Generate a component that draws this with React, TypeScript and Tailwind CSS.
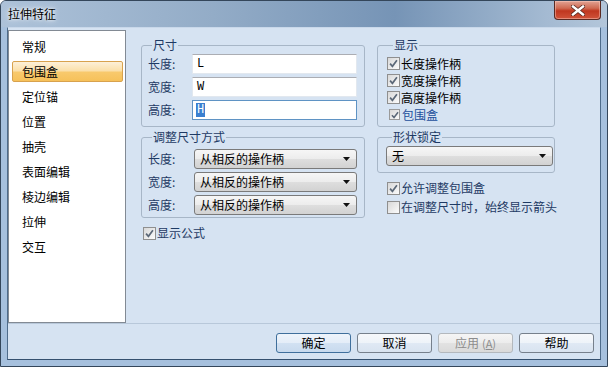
import React from "react";

const NAVY = "text-[#1e3a64]";

function Check({ checked, small }: { checked: boolean; small?: boolean }) {
  return (
    <span
      className={
        small
          ? "flex items-center justify-center shrink-0 w-[11px] h-[11px] border border-[#9a9a9a] bg-[linear-gradient(135deg,#d8d8d8,#fbfbfb)]"
          : "flex items-center justify-center shrink-0 w-[13px] h-[13px] border border-[#8f8f8f] bg-[linear-gradient(135deg,#d8d8d8,#fbfbfb)]"
      }
    >
      {checked && (
        <svg viewBox="0 0 10 10" className={small ? "w-[8px] h-[8px]" : "w-[9px] h-[9px]"}>
          <path d="M1.2 5.2 L3.8 8.2 L8.8 1.5" stroke="#5b6878" strokeWidth="1.9" fill="none" />
        </svg>
      )}
    </span>
  );
}

function Combo({ text }: { text: string }) {
  return (
    <div className="flex-1 h-[20px] flex items-center justify-between rounded-[3px] border border-[#7a7a7a] bg-[linear-gradient(to_bottom,#f6f6f6,#ececec_50%,#dedede_51%,#d2d2d2)] pl-[5px] pr-[6px] text-[12px] text-black">
      <span className="leading-[16px]">{text}</span>
      <svg width="7" height="4" viewBox="0 0 7 4">
        <path d="M0 0h7L3.5 4z" fill="#111" />
      </svg>
    </div>
  );
}

function Btn({ children, kind }: { children: React.ReactNode; kind?: "default" | "disabled" }) {
  const cls =
    kind === "default"
      ? "border-[#3f6f9c] bg-[linear-gradient(to_bottom,#eef4fb,#e4edf8_50%,#d2e1f2_51%,#c8daee)] text-black"
      : kind === "disabled"
      ? "border-[#b3b8bd] bg-[linear-gradient(to_bottom,#f5f5f5,#ececec_50%,#e2e2e2_51%,#dadada)] text-[#8c8c8c]"
      : "border-[#76808c] bg-[linear-gradient(to_bottom,#f6f8fb,#eef3f9_50%,#e0e9f4_51%,#d8e3f0)] text-black";
  return (
    <div className={`w-[75px] h-[20px] flex items-center justify-center rounded-[3px] border text-[12px] leading-[16px] ${cls}`}>
      {children}
    </div>
  );
}

export default function App() {
  const items = ["常规", "包围盒", "定位锚", "位置", "抽壳", "表面编辑", "棱边编辑", "拉伸", "交互"];
  return (
    <div className="w-[608px] h-[367px] flex flex-col border border-[#34465a] rounded-t-[6px] overflow-hidden bg-[#a6c0dd] font-['Noto_Sans_CJK_SC','Noto_Sans',sans-serif] text-[12px]">
      {/* title bar */}
      <div className="h-[26px] shrink-0 flex justify-between bg-[linear-gradient(to_right,#adc2d9,#93acc7_35%,#7694b6_65%,#a4bad2_90%,#b3c6da)]">
        <div className="pl-[7px] pt-[5px] text-[12px] leading-[16px] text-black [text-shadow:0_0_6px_#ffffff,0_0_3px_#ffffff]">
          拉伸特征
        </div>
        <div className="mr-[6px] w-[47px] h-[19px] flex items-center justify-center rounded-b-[4px] border border-t-0 border-[#5a2a22] bg-[linear-gradient(to_bottom,#e2a394,#cf6a52_40%,#c0371f_55%,#d0533a)] shadow-[inset_0_0_0_1px_rgba(255,210,200,0.45)]">
          <svg width="14" height="11" viewBox="0 0 14 11">
            <path d="M2 1.5 L12 9.5 M12 1.5 L2 9.5" stroke="#5a2a22" strokeWidth="4" strokeLinecap="square" />
            <path d="M2 1.5 L12 9.5 M12 1.5 L2 9.5" stroke="#ffffff" strokeWidth="2.4" strokeLinecap="square" />
          </svg>
        </div>
      </div>

      {/* client */}
      <div className="mx-[6px] h-[333px] shrink-0 flex flex-col border border-t-[#c9d8ea] border-x-[#4e6b8a] border-b-[#34506f] bg-[#d6e3f2]">
        <div className="h-[295px] shrink-0 flex">
          {/* list */}
          <div className="w-[118px] mt-[2px] shrink-0 flex flex-col pt-[3px] bg-white border border-[#828a94]">
            {items.map((t, i) => (
              <div key={t} className="h-[25px] flex items-center">
                <div
                  className={
                    i === 1
                      ? "ml-[3px] mr-[2px] flex-1 h-[21px] flex items-center pl-[9px] rounded-[2px] border border-[#d8a24e] bg-[linear-gradient(to_bottom,#fdf0d8,#fbe0aa_45%,#f8c96c_55%,#f6c15a)] text-black leading-[16px]"
                      : "ml-[3px] mr-[2px] flex-1 h-[21px] flex items-center pl-[10px] text-black leading-[16px]"
                  }
                >
                  {t}
                </div>
              </div>
            ))}
          </div>

          {/* main */}
          <div className="flex gap-[12px] ml-[15px] mt-[9px]">
            {/* left column */}
            <div className="w-[224px] flex flex-col">
              <fieldset className="border border-[#a7b6c7] rounded-[3px] pl-[6px] pr-[7px] pt-[1px] pb-[6px] flex flex-col gap-[3px]">
                <legend className={`ml-[4px] px-[1px] leading-[16px] ${NAVY}`}>尺寸</legend>
                <div className="h-[20px] flex items-center">
                  <span className={`w-[44px] leading-[16px] ${NAVY}`}>长度:</span>
                  <div className="flex-1 h-[20px] flex items-center bg-white border border-[#e2e8ef] border-t-[#abadb3] pl-[4px] font-['Liberation_Mono',monospace] text-[12px] text-black">
                    L
                  </div>
                </div>
                <div className="h-[20px] flex items-center">
                  <span className={`w-[44px] leading-[16px] ${NAVY}`}>宽度:</span>
                  <div className="flex-1 h-[20px] flex items-center bg-white border border-[#e2e8ef] border-t-[#abadb3] pl-[4px] font-['Liberation_Mono',monospace] text-[12px] text-black">
                    W
                  </div>
                </div>
                <div className="h-[20px] flex items-center">
                  <span className={`w-[44px] leading-[16px] ${NAVY}`}>高度:</span>
                  <div className="flex-1 h-[20px] flex items-center bg-white border border-[#5f93c4] pl-[3px] font-['Liberation_Mono',monospace] text-[12px]">
                    <span className="bg-[#3a7fd0] text-white px-[1px] leading-[14px]">H</span>
                  </div>
                </div>
              </fieldset>

              <fieldset className="mt-[2px] border border-[#a7b6c7] rounded-[3px] pl-[6px] pr-[7px] pt-[4px] pb-[2px] flex flex-col gap-[3px]">
                <legend className={`ml-[4px] px-[1px] leading-[16px] ${NAVY}`}>调整尺寸方式</legend>
                {["长度:", "宽度:", "高度:"].map((l) => (
                  <div key={l} className="h-[20px] flex items-center">
                    <span className={`w-[46px] leading-[16px] ${NAVY}`}>{l}</span>
                    <Combo text="从相反的操作柄" />
                  </div>
                ))}
              </fieldset>

              <div className="mt-[7px] ml-[2px] h-[16px] flex items-center gap-[1px]">
                <Check checked />
                <span className={`leading-[16px] ${NAVY}`}>显示公式</span>
              </div>
            </div>

            {/* right column */}
            <div className="w-[178px] flex flex-col">
              <fieldset className="border border-[#a7b6c7] rounded-[3px] pl-[9px] pr-[4px] pt-[2px] pb-[3px] flex flex-col">
                <legend className={`ml-[6px] px-[1px] leading-[16px] ${NAVY}`}>显示</legend>
                {["长度操作柄", "宽度操作柄", "高度操作柄"].map((t) => (
                  <div key={t} className="h-[17px] flex items-center gap-[1px]">
                    <Check checked />
                    <span className="leading-[16px] text-black">{t}</span>
                  </div>
                ))}
                <div className="h-[17px] flex items-center gap-[2px] pl-[2px]">
                  <Check checked small />
                  <span className="leading-[16px] text-[#1c4f9c]">包围盒</span>
                </div>
              </fieldset>

              <fieldset className="mt-[2px] border border-[#a7b6c7] rounded-[3px] pl-[8px] pr-[1px] pt-[1px] pb-[6px] flex">
                <legend className={`ml-[6px] px-[1px] leading-[16px] ${NAVY}`}>形状锁定</legend>
                <Combo text="无" />
              </fieldset>

              <div className="mt-[7px] pl-[10px] flex flex-col gap-[3px]">
                <div className="h-[16px] flex items-center gap-[1px]">
                  <Check checked />
                  <span className={`leading-[16px] whitespace-nowrap ${NAVY}`}>允许调整包围盒</span>
                </div>
                <div className="h-[16px] flex items-center gap-[1px]">
                  <Check checked={false} />
                  <span className={`leading-[16px] whitespace-nowrap ${NAVY}`}>在调整尺寸时，始终显示箭头</span>
                </div>
              </div>
            </div>
          </div>
        </div>

        {/* footer */}
        <div className="flex-1 border-t border-[#b8c8da] flex justify-end items-start gap-[6px] pt-[9px] pr-[6px]">
          <Btn kind="default">确定</Btn>
          <Btn>取消</Btn>
          <Btn kind="disabled">
            <span>应用</span>
            <span className="ml-[3px] text-[11px]">(<span className="underline">A</span>)</span>
          </Btn>
          <Btn>帮助</Btn>
        </div>
      </div>
    </div>
  );
}
